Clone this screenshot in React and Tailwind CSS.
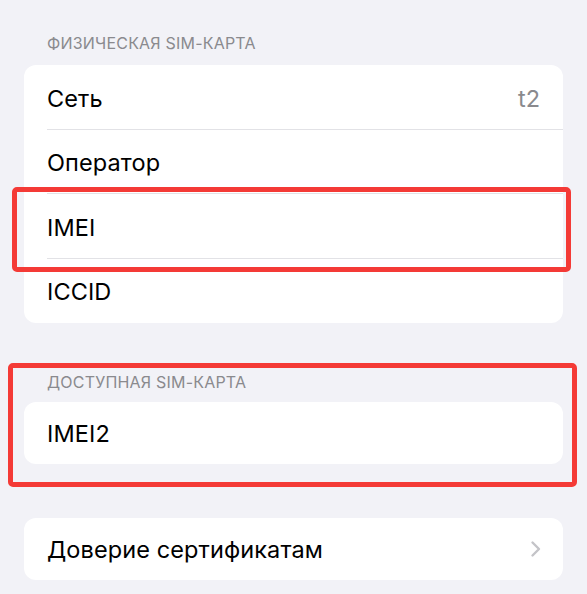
const font = { fontFamily: '"Inter", "Noto Sans", sans-serif' };

function Row({ label, value, chevron, divider, h = 'h-[64px]' }) {
  return (
    <div className={`relative flex ${h} items-center pl-[23px] pr-[23px]`}>
      <span className="translate-y-[1px] text-[23.5px] tracking-[0.1px] text-black">{label}</span>
      {value && <span className="ml-auto translate-y-[1px] text-[23.5px] text-[#8a8a8e]">{value}</span>}
      {chevron && (
        <svg className="ml-auto mr-[-2px]" width="12" height="18" viewBox="0 0 12 18" fill="none">
          <path d="M2.5 2.5L9 9l-6.5 6.5" stroke="#c4c4c8" strokeWidth="2.4" strokeLinecap="round" strokeLinejoin="round" />
        </svg>
      )}
      {divider && <div className="absolute bottom-0 left-[23px] right-0 h-px bg-[#e2e2e6]" />}
    </div>
  );
}

function Header({ children, className = '' }) {
  return (
    <div className={`flex h-[22px] items-center pl-[23px] text-[16px] uppercase tracking-[0.2px] text-[#8a8a8e] ${className}`}>
      {children}
    </div>
  );
}

export default function App() {
  return (
    <div className="relative h-[594px] w-[587px] overflow-hidden bg-[#f2f2f7]" style={font}>
      <div className="flex flex-col px-6 pt-[32px]">
        <Header>Физическая SIM-карта</Header>
        <div className="mt-[11px] rounded-[12px] bg-white">
          <Row label="Сеть" value="t2" divider h="h-[64.5px]" />
          <Row label="Оператор" divider h="h-[64.5px]" />
          <Row label="IMEI" divider h="h-[64.5px]" />
          <Row label="ICCID" h="h-[64.5px]" />
        </div>

        <Header className="mt-[48px]">Доступная SIM-карта</Header>
        <div className="mt-[9px] rounded-[12px] bg-white">
          <Row label="IMEI2" h="h-[62px]" />
        </div>

        <div className="mt-[54px] rounded-[12px] bg-white">
          <Row label="Доверие сертификатам" chevron h="h-[62px]" />
        </div>
      </div>

      <div className="absolute left-[12px] top-[187px] h-[85px] w-[559px] rounded-[5px] border-[5px] border-[#f43a36]" />
      <div className="absolute left-[8px] top-[363px] h-[124px] w-[569px] rounded-[5px] border-[5px] border-[#f43a36]" />
    </div>
  );
}
